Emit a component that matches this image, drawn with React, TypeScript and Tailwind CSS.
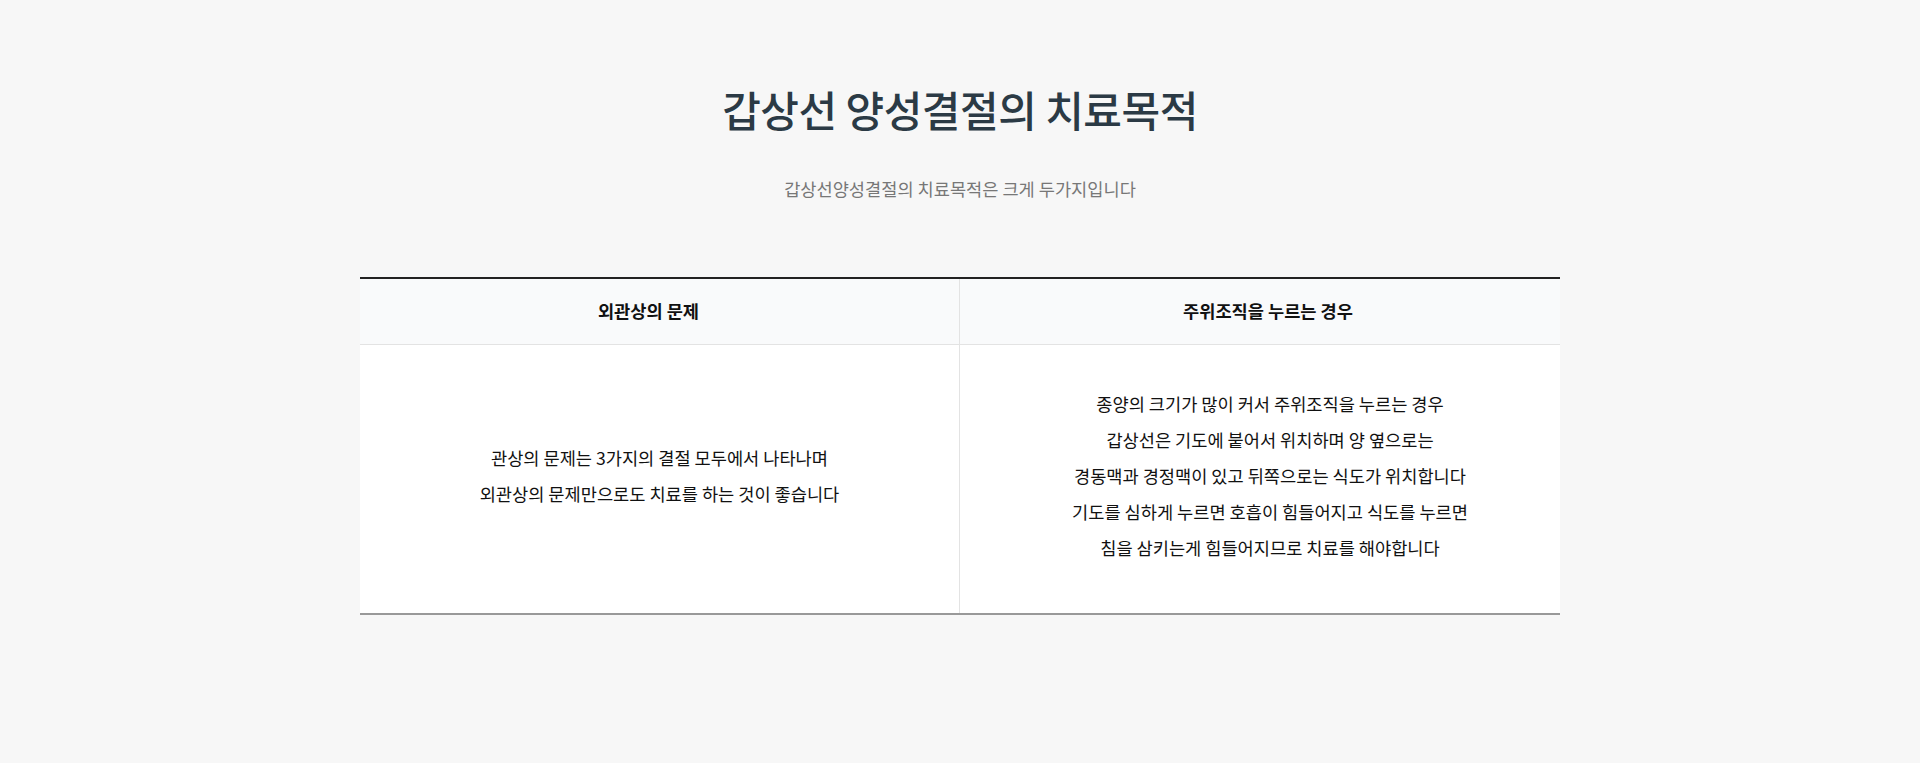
const rows = [
  {
    title: '외관상의 문제',
    head: 'pr-[22px] border-r border-[#e3e3e3]',
    body: 'border-r border-[#e3e3e3]',
    lines: ['관상의 문제는 3가지의 결절 모두에서 나타나며', '외관상의 문제만으로도 치료를 하는 것이 좋습니다'],
  },
  {
    title: '주위조직을 누르는 경우',
    head: 'pl-[16px]',
    body: 'pl-[20px]',
    lines: [
      '종양의 크기가 많이 커서 주위조직을 누르는 경우',
      '갑상선은 기도에 붙어서 위치하며 양 옆으로는',
      '경동맥과 경정맥이 있고 뒤쪽으로는 식도가 위치합니다',
      '기도를 심하게 누르면 호흡이 힘들어지고 식도를 누르면',
      '침을 삼키는게 힘들어지므로 치료를 해야합니다',
    ],
  },
];

export default function App() {
  return (
    <div
      className="min-h-screen bg-[#f7f7f7] pt-[79px]"
      style={{ fontFamily: '"Noto Sans CJK KR", "Noto Sans", sans-serif' }}
    >
      {/* Heading */}
      <div className="text-center">
        <h2 className="text-[42px] leading-[59px] font-medium text-[#2b3a45] tracking-[-0.5px]">
          갑상선 양성결절의 치료목적
        </h2>
        <p className="mt-[37px] text-[17.6px] leading-[27px] text-[#777]">
          갑상선양성결절의 치료목적은 크게 두가지입니다
        </p>
      </div>

      {/* Table */}
      <div className="mx-auto mt-[75px] w-[1200px] border-t-2 border-b-2 border-t-[#222] border-b-[#999] bg-white">
        <div className="grid grid-cols-2 bg-[#f9fafb] border-b border-[#e3e3e3]">
          {rows.map((row) => (
            <div
              key={row.title}
              className={`h-[65px] flex items-center justify-center text-[17.6px] font-bold text-[#111] ${row.head}`}
            >
              {row.title}
            </div>
          ))}
        </div>
        <div className="grid grid-cols-2">
          {rows.map((row) => (
            <div
              key={row.title}
              className={`pt-[41px] pb-[47px] flex flex-col items-center justify-center text-[17.6px] leading-[36px] text-[#111] ${row.body}`}
            >
              {row.lines.map((line) => (
                <p key={line}>{line}</p>
              ))}
            </div>
          ))}
        </div>
      </div>
    </div>
  );
}
